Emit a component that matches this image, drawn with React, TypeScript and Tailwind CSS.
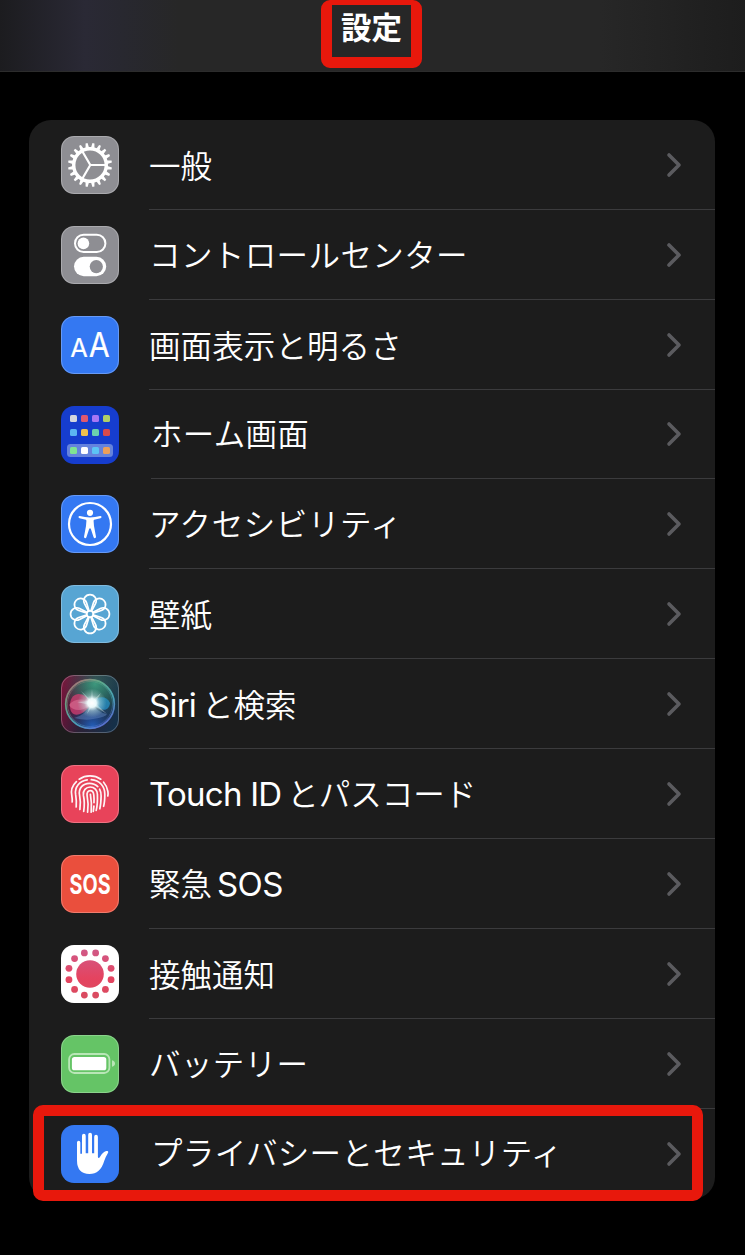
import type { ReactNode } from "react";

const petals = [0, 45, 90, 135, 180, 225, 270, 315];
const teeth = Array.from({ length: 20 }, (_, i) => i * 18);
const dots = Array.from({ length: 12 }, (_, i) => i * 30 + 15);

function Gear() {
  return (
    <g stroke="#fff" fill="none">
      <circle cx="29" cy="29" r="16.3" strokeWidth="3.4" />
      {teeth.map((a) => (
        <path key={a} d="M27.1 12.5 L28 7 L30 7 L30.9 12.5Z" fill="#fff" stroke="none" transform={`rotate(${a + 9} 29 29)`} />
      ))}
      <path d="M29.3 29H45M29.3 29L21.3 15.3M29.3 29L21.3 42.7" strokeWidth="2.2" />
    </g>
  );
}

function Toggles() {
  return (
    <g>
      <rect x="14" y="8.8" width="30.4" height="17.2" rx="8.6" fill="none" stroke="#fff" strokeWidth="2" />
      <circle cx="22.4" cy="17.4" r="5.8" fill="#fff" />
      <rect x="13" y="30.8" width="32.2" height="19.4" rx="9.7" fill="#fff" />
      <circle cx="35.3" cy="40.6" r="6.6" fill="#8e8e93" />
    </g>
  );
}

function TextSize() {
  return (
    <g fill="#fff" fontFamily="Inter, sans-serif" fontWeight="400" stroke="#fff" strokeLinejoin="round" strokeWidth="0.2">
      <text x="9.2" y="41.2" fontSize="26" textLength="17.6" lengthAdjust="spacingAndGlyphs">A</text>
      <text x="27.8" y="41.2" fontSize="33.5" textLength="21" lengthAdjust="spacingAndGlyphs">A</text>
    </g>
  );
}

const appColors = [
  ["#d3d5de", "#e0596f", "#a777f5", "#b0cf68"],
  ["#5cb5f2", "#f0c04e", "#6bd0ae", "#d94a4c"],
  ["#7fe392", "#ffffff", "#5cc4f5", "#eda05a"],
];
const appX = [9, 20, 31, 42];
const appY = [9, 23, 41];

function HomeScreen() {
  return (
    <g>
      <rect x="6" y="38" width="46" height="13" rx="3.5" fill="#6583dd" />
      {appColors.map((row, r) =>
        row.map((c, i) => <rect key={c} x={appX[i]} y={appY[r]} width="7" height="7" rx="1.6" fill={c} />),
      )}
    </g>
  );
}

function Accessibility() {
  return (
    <g fill="#fff">
      <circle cx="29" cy="29" r="21" fill="none" stroke="#fff" strokeWidth="2.2" />
      <circle cx="29" cy="17.8" r="3.1" />
      <path d="M18.8 21.1Q24 22.4 29 22.4T39.2 21.1Q40.6 21 40.5 22.2Q40.4 22.9 39.5 23.2L33.2 24.8Q32.5 25 32.6 26L33 31L35 41.8Q35 43.2 33.9 43.2Q32.9 43.2 32.6 42.2L29.7 33.5H28.3L25.4 42.2Q25.1 43.2 24.1 43.2Q23 43.2 23 41.8L25 31L25.4 26Q25.5 25 24.8 24.8L18.5 23.2Q17.6 22.9 17.5 22.2Q17.4 21 18.8 21.1Z" />
    </g>
  );
}

function Flower() {
  return (
    <g fill="none" stroke="#fff" strokeWidth="1.7">
      {petals.map((a) => (
        <path key={a} d="M27.6 26.3L23.5 18.6A6.2 6.2 0 1 1 34.5 18.6L30.4 26.3" transform={`rotate(${a} 29 29)`} />
      ))}
      <circle cx="29" cy="29" r="3.2" />
    </g>
  );
}

function Siri() {
  return (
    <g>
      <defs>
        <linearGradient id="siriBack" x1="0" y1="0.3" x2="1" y2="0.6">
          <stop offset="0" stopColor="#7b0f38" />
          <stop offset="0.45" stopColor="#2c2136" />
          <stop offset="1" stopColor="#153049" />
        </linearGradient>
        <radialGradient id="siriGreen" cx="0.6" cy="0.1" r="0.7">
          <stop offset="0" stopColor="#40a987" stopOpacity="0.8" />
          <stop offset="1" stopColor="#1f7264" stopOpacity="0" />
        </radialGradient>
        <radialGradient id="siriBlue" cx="0.55" cy="0.95" r="0.6">
          <stop offset="0" stopColor="#2365c8" stopOpacity="0.9" />
          <stop offset="1" stopColor="#173671" stopOpacity="0" />
        </radialGradient>
        <linearGradient id="siriRing" x1="0" y1="0" x2="0.7" y2="1">
          <stop offset="0" stopColor="#d85f75" />
          <stop offset="0.35" stopColor="#65ae8b" />
          <stop offset="0.7" stopColor="#4dabc0" />
          <stop offset="1" stopColor="#5f72d5" />
        </linearGradient>
        <radialGradient id="siriGlow">
          <stop offset="0" stopColor="#fff" />
          <stop offset="0.3" stopColor="#f2ffff" stopOpacity="0.95" />
          <stop offset="0.55" stopColor="#c6e8e8" stopOpacity="0.45" />
          <stop offset="1" stopColor="#a9dcd7" stopOpacity="0" />
        </radialGradient>
      </defs>
      <rect width="58" height="58" rx="13" fill="url(#siriBack)" />
      <rect width="58" height="58" rx="13" fill="url(#siriGreen)" opacity="0.5" />
      <circle cx="29" cy="29" r="25" fill="url(#siriGreen)" />
      <circle cx="29" cy="29" r="25" fill="url(#siriBlue)" />
      <path d="M31 28C22 15 10 17 9 29C8 43 20 44 31 28Z" fill="#d53d72" opacity="0.75" />
      <path d="M31 28C24 23 13 23 8 30C12 37 24 37 31 28Z" fill="#ef8cac" opacity="0.4" />
      <path d="M31 28C37 20 46 21 49 28C48 37 40 37 31 28Z" fill="#2699d7" opacity="0.65" />
      <path d="M31 28Q25 40 13 43Q25 46 32 44Q45 42 46 39Q35 37 31 28Z" fill="#6f93cf" opacity="0.4" />
      <circle cx="29" cy="29" r="24.3" fill="none" stroke="url(#siriRing)" strokeWidth="1.7" opacity="0.9" />
      <circle cx="29" cy="29" r="22.6" fill="none" stroke="url(#siriRing)" strokeWidth="0.7" opacity="0.6" />
      <path d="M31 14L32 25L40 18L34 28L46 39L32 30L26 39L29 30L16 27L28 26L20 16L30 25Z" fill="#f2ffff" opacity="0.4" />
      <circle cx="31" cy="28" r="14.5" fill="url(#siriGlow)" />
    </g>
  );
}

function TouchId() {
  return (
    <g fill="none" stroke="#fff" strokeWidth="1.7" strokeLinecap="round" opacity="0.95">
      <path d="M18.2 14.2Q23 10.9 29 10.9T39.8 14.2" />
      <path d="M15.4 16.6C11 20.6 9.6 26 10.9 31.5Q11.4 34 11.2 37" />
      <path d="M42.6 17.2Q46 21 46.9 26.5Q47.3 29 46.8 31" />
      <path d="M26.2 14.9C18.5 16 13.6 22 14.6 29.2Q15.7 36 15.2 42" />
      <path d="M30.3 14.7C38.8 15.3 43.8 21.5 43.8 29Q43.8 37 42.6 41.3" />
      <path d="M18.9 44.5Q20 37 18.6 30.5C17 23 22.2 18.3 28.4 18.3Q33.6 18.3 36.8 21.7" />
      <path d="M38.6 24.2Q40.2 27.3 40.1 31Q40 39 38.8 43.8" />
      <path d="M22.7 46.3Q24 37.3 22.4 30.2C21.6 25.5 25 22 29.2 22C33.5 22 36.3 25.2 36.4 29.3Q36.8 39 35.2 45.4" />
      <path d="M26.6 47.2Q27.8 39 26.1 30.6C25.6 27.6 27 25.6 29.3 25.6S32.6 27.3 32.8 30Q33.2 34 33 37.6" />
      <path d="M29.4 29.3Q31 38 30.2 47.2" />
      <path d="M32.9 41.2L32.3 46.4" />
    </g>
  );
}

function Sos() {
  return (
    <text x="8.6" y="38.8" fill="#fff" fontFamily="Inter, sans-serif" fontSize="26.5" fontWeight="700" textLength="41" lengthAdjust="spacingAndGlyphs">
      SOS
    </text>
  );
}

function Exposure() {
  return (
    <g fill="url(#exposurePink)">
      <defs>
        <linearGradient id="exposurePink" gradientUnits="userSpaceOnUse" x1="0" y1="6" x2="0" y2="52">
          <stop offset="0" stopColor="#d15885" />
          <stop offset="0.6" stopColor="#e5435f" />
          <stop offset="1" stopColor="#d94c61" />
        </linearGradient>
      </defs>
      <circle cx="29" cy="29" r="13.8" />
      {dots.map((a) => {
        const t = (a * Math.PI) / 180;
        return <circle key={a} cx={29 + 21.8 * Math.cos(t)} cy={29 + 21.8 * Math.sin(t)} r="3.4" />;
      })}
    </g>
  );
}

function Battery() {
  return (
    <g fill="#fff">
      <rect x="8.1" y="19" width="40.3" height="19" rx="5.2" fill="none" stroke="#b9e6b7" strokeWidth="1.8" />
      <rect x="10.9" y="21.9" width="34.4" height="13.4" rx="2.6" />
      <path d="M51 25.2Q54 26 54 28.5T51 31.8Z" fill="#b9e6b7" />
    </g>
  );
}

function Hand() {
  return (
    <path
      fill="#fff"
      d="M16 17.4a1.65 1.65 0 0 1 3.3 0V28.7H21V10.7a1.85 1.85 0 0 1 3.7 0V28.2H27.2V9.7a1.9 1.9 0 0 1 3.8 0V28.2H33.2V11.7a1.85 1.85 0 0 1 3.7 0V32.2Q37.4 33.6 38.8 32.2Q41.8 27.2 45.2 26.1Q47.6 25.6 47.2 27.4Q44.8 31.3 43.2 36Q39.4 49 28.4 49Q16 48.6 16 35.5Z"
    />
  );
}

function Latin({ children }: { children: ReactNode }) {
  return <span className="mr-1.5 font-[Inter] text-[33px] font-normal tracking-[-0.75px]">{children}</span>;
}

type Item = { label: ReactNode; icon: ReactNode; tile: string; inset?: string; text?: string; short?: boolean; plain?: boolean };

const items: Item[] = [
  { label: "一般", icon: <Gear />, tile: "bg-[#8e8e93]" },
  { label: "コントロールセンター", icon: <Toggles />, tile: "bg-[#8e8e93]", text: "pb-[3px] tracking-[0.4px]" },
  { label: "画面表示と明るさ", icon: <TextSize />, tile: "bg-[#3478f2]", text: "pb-[2px] tracking-[0.1px]" },
  { label: "ホーム画面", icon: <HomeScreen />, tile: "bg-[#163dce]", inset: "ml-8", text: "pb-[4px] tracking-[0.3px]", short: true, plain: true },
  { label: "アクセシビリティ", icon: <Accessibility />, tile: "bg-[#3478f2]", text: "pb-[3px] tracking-[0.6px]" },
  { label: "壁紙", icon: <Flower />, tile: "bg-[#57a5d3]" },
  { label: <><Latin>Siri</Latin>と検索</>, icon: <Siri />, tile: "bg-[#2c2136]", text: "tracking-[-0.1px]" },
  { label: <><Latin>Touch ID</Latin>とパスコード</>, icon: <TouchId />, tile: "bg-[#e8435a]" },
  { label: <>緊急<span className="ml-[5px] font-[Inter] text-[33px] font-normal tracking-[-0.6px]">SOS</span></>, icon: <Sos />, tile: "bg-[#ea4f3d]" },
  { label: "接触通知", icon: <Exposure />, tile: "bg-white" },
  { label: "バッテリー", icon: <Battery />, tile: "bg-[#65c466]", text: "pb-[3px] tracking-[0.4px]" },
  { label: "プライバシーとセキュリティ", icon: <Hand />, tile: "bg-[#3478f2]", inset: "ml-8", text: "pb-[6px] tracking-[0.35px]", plain: true },
];

function Row({ item, last }: { item: Item; last: boolean }) {
  return (
    <li className={`flex pl-8 ${item.short ? "h-[89px]" : "h-[90px]"}`}>
      <div className={`relative mt-4 size-[58px] shrink-0 rounded-[13px] ${item.tile}`}>
        <svg viewBox="0 0 58 58" className="size-[58px] overflow-visible">{item.icon}</svg>
        {!item.plain && <div className="absolute inset-0 rounded-[13px] border border-white/25" />}
      </div>
      <div className={`flex min-w-0 flex-1 items-center justify-between pr-[33px] ${item.inset ?? "ml-[30px]"} ${last ? "" : "border-b border-[#3b3b3d]"}`}>
        <span className={`text-[31.5px] leading-[44px] font-[350] whitespace-nowrap text-white ${item.text ?? "pb-[2px]"}`}>{item.label}</span>
        <svg viewBox="0 0 16 26" className="h-[26px] w-4 shrink-0" fill="none" stroke="#5b5b5f" strokeWidth="3.6" strokeLinecap="round" strokeLinejoin="round">
          <path d="M3 3L13 13L3 23" />
        </svg>
      </div>
    </li>
  );
}

export default function App() {
  return (
    <div className="relative h-[1255px] w-[745px] overflow-hidden bg-black font-['Noto_Sans_CJK_JP',sans-serif]" lang="ja">
      <header className="flex h-[72px] justify-center border-b border-[#2c2c2c] bg-[linear-gradient(90deg,#1c1c1f_0,#2a2935_85px,#282830_120px,#272727_180px,#272727_600px,#1d1d1d_745px)]">
        <h1 className="mt-1 mr-0.5 text-[30.5px] leading-[44px] font-bold text-white">設定</h1>
      </header>
      <ul className="mt-12 ml-[29px] w-[686px] rounded-[22px] bg-[#1c1c1c]">
        {items.map((item, i) => (
          <Row key={i} item={item} last={i === items.length - 1} />
        ))}
      </ul>
      <div className="absolute top-0 left-[321px] h-[68px] w-[101px] rounded-[9px] border-x-[11px] border-t-[5px] border-b-[11px] border-[#e8180c]" />
      <div className="absolute top-[1105px] left-[33px] h-[96px] w-[670px] rounded-[10px] border-[11px] border-[#e8180c]" />
    </div>
  );
}
